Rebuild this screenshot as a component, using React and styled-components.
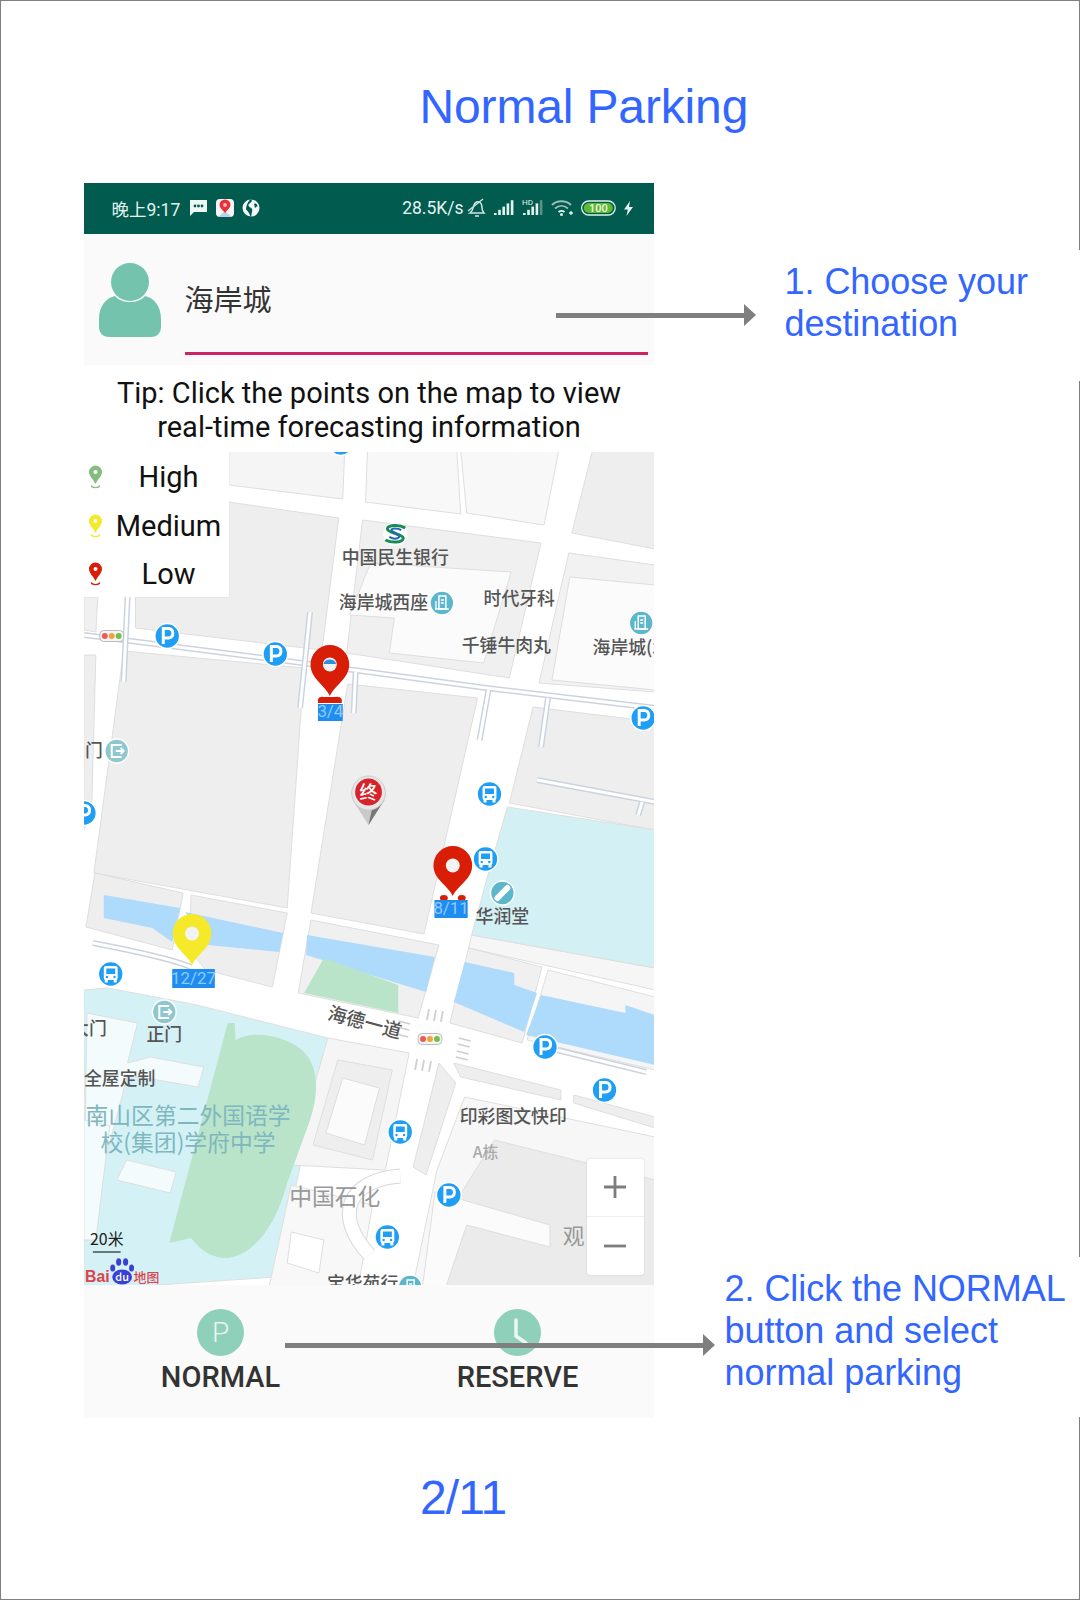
import React from 'react';
import styled, { createGlobalStyle } from 'styled-components';

const Global = createGlobalStyle`
  html, body { margin: 0; padding: 0; background: #fff; }
`;

const Frame = styled.div`
  box-sizing: border-box;
  width: 1080px;
  height: 1600px;
  border: 1.5px solid #7f7f7f;
  font-family: "Liberation Sans", Arial, sans-serif;
  color: #3366ff;
`;

const Title = styled.h1`
  margin: 0;
  height: 181.5px;
  padding: 78px 0 0 418.5px;
  box-sizing: border-box;
  font-size: 48px;
  line-height: 56px;
  font-weight: 400;
  letter-spacing: -0.15px;
`;

const Stage = styled.div`
  position: relative;
  display: flex;
  height: 1235px;
`;

const Phone = styled.div`
  width: 570px;
  margin-left: 82.5px;
  display: flex;
  flex-direction: column;
  font-family: Roboto, "Noto Sans CJK SC", sans-serif;
  color: #111;
`;

const StatusBar = styled.div`
  height: 51px;
  flex: none;
  background: #015b4f;
  display: flex;
  align-items: center;
  padding: 0 21px 0 28px;
  color: #e4f2ee;
  font-size: 17.5px;
`;

const StatusText = styled.span`
  font-family: Roboto, "Noto Sans CJK SC", sans-serif;
  letter-spacing: ${p => p.$spacing || 0}px;
  white-space: nowrap;
`;

const StatusGroup = styled.div`
  display: flex;
  align-items: center;
  gap: ${p => p.$gap}px;
  margin-left: ${p => p.$left || 0}px;
`;

const Spacer = styled.div`
  flex: 1;
`;

const Header = styled.div`
  height: 131px;
  flex: none;
  box-sizing: border-box;
  background: #fafafa;
  display: flex;
  align-items: flex-start;
  padding: 0 6px 0 14px;
`;

const Avatar = styled.svg`
  width: 64px;
  height: 76px;
  margin-top: 27px;
  flex: none;
`;

const SearchField = styled.div`
  flex: 1;
  margin-left: 23px;
  height: 121px;
  box-sizing: border-box;
  padding: 31px 0 20px;
  display: flex;
  align-items: center;
  border-bottom: 3px solid #cb2662;
  font-family: "Noto Sans CJK SC", sans-serif;
  font-size: 29px;
  font-weight: 400;
  color: #333;
`;

const Tip = styled.div`
  height: 87px;
  flex: none;
  box-sizing: border-box;
  padding: 11px 0 0 1px;
  background: #fff;
  text-align: center;
  font-size: 29px;
  line-height: 34px;
  color: #111;
`;

const MapArea = styled.div`
  position: relative;
  height: 833px;
  flex: none;
  overflow: hidden;
  background: #fff;
`;

const MapDrawing = styled.svg`
  display: block;
  width: 570px;
  height: 833px;
`;

const MapLabel = styled.text`
  font-family: "Noto Sans CJK SC", sans-serif;
  font-size: ${p => p.$size || 18}px;
  font-weight: ${p => p.$weight || 500};
  fill: ${p => p.$color || '#555'};
  text-anchor: ${p => p.$anchor || 'middle'};
`;

const LogoWord = styled.text`
  font-family: "Liberation Sans", sans-serif;
  font-size: 16px;
  font-weight: 700;
  fill: #e0414a;
`;

const PinCount = styled.text`
  font-family: Roboto, sans-serif;
  font-size: ${p => p.$size || 17}px;
  fill: #8fcbff;
  text-anchor: middle;
`;

const Legend = styled.div`
  position: absolute;
  left: 0;
  top: 0;
  width: 145px;
  height: 145px;
  box-sizing: border-box;
  padding-top: 1.5px;
  background: #fff;
  display: flex;
  flex-direction: column;
`;

const LegendRow = styled.div`
  height: 48.5px;
  flex: none;
  display: flex;
  align-items: center;
  font-size: 29px;
  color: #111;
`;

const LegendPin = styled.svg`
  width: 15px;
  height: 24px;
  margin-left: 4px;
  flex: none;
`;

const LegendName = styled.span`
  flex: 1;
  text-align: center;
  padding-left: 6px;
`;

const ZoomBox = styled.div`
  position: absolute;
  right: 10px;
  bottom: 10px;
  width: 57px;
  height: 116px;
  background: #fff;
  border-radius: 3px;
  box-shadow: 0 0 2px rgba(0,0,0,.15);
  display: flex;
  flex-direction: column;
`;

const ZoomStep = styled.div`
  flex: 1;
  display: flex;
  align-items: center;
  justify-content: center;
  color: #7d7d7d;
  & + & { border-top: 1px solid #eee; }
`;

const BottomBar = styled.div`
  flex: 1;
  background: #fafafa;
  display: flex;
  gap: 137px;
  padding: 24px 0 0 57px;
`;

const NavButton = styled.div`
  width: 160px;
  display: flex;
  flex-direction: column;
  align-items: center;
  gap: 4px;
`;

const NavCircle = styled.div`
  width: 47px;
  height: 47px;
  border-radius: 50%;
  background: #8fd0bb;
  display: flex;
  align-items: center;
  justify-content: center;
  color: #eaf7f2;
  font-size: 28px;
  font-weight: 300;
`;

const NavLabel = styled.div`
  font-size: 29px;
  line-height: 34px;
  font-weight: 500;
  color: #333;
`;

const Notes = styled.div`
  flex: 1;
  position: relative;
  margin-right: -2px;
  display: flex;
  flex-direction: column;
  justify-content: space-between;
  padding: 67px 0 1px;
`;

const Note = styled.div`
  margin-left: ${p => p.$left}px;
  height: ${p => p.$height}px;
  box-sizing: border-box;
  padding: 11px 0 0 ${p => p.$pad}px;
  background: #fff;
  font-size: 36px;
  line-height: 42px;
  letter-spacing: -0.05px;
  white-space: nowrap;
`;

const ArrowLine = styled.div`
  position: absolute;
  left: ${p => p.$left}px;
  top: ${p => p.$top}px;
  width: ${p => p.$width}px;
  height: 5px;
  background: #7f7f7f;
  &::after {
    content: '';
    position: absolute;
    right: -12px;
    top: -9px;
    border-left: 12px solid #7f7f7f;
    border-top: 11.5px solid transparent;
    border-bottom: 11.5px solid transparent;
  }
`;

const PageNumber = styled.div`
  padding: 52px 0 0 419px;
  font-size: 48px;
  line-height: 56px;
  letter-spacing: -0.9px;
`;

const blocks = [
  ['230,450 347,450 345,499 230,485', '#f5f5f5'],
  ['370,450 460,450 464,514 368,502', '#f8f8f8'],
  ['464,450 563,450 548,525 470,513', '#f8f8f8'],
  ['597,450 660,450 660,549 576,533', '#eeeeee'],
  ['136,597 230,597 230,502 341,518 324,650 136,628', '#eeeeee'],
  ['84,597 98,597 96,632 84,630', '#f0f0f0'],
  ['84,655 96,655 92,800 84,830', '#eeeeee'],
  ['124,651 306,668 289,908 94,873', '#eeeeee'],
  ['350,684 481,698 427,934 313,913', '#eeeeee'],
  ['365,520 545,543 513,678 349,653', '#f0f0f0'],
  ['373,563 515,572 487,663 392,653 397,618 352,615', '#fbfbfb'],
  ['573,553 660,565 660,692 543,683', '#f2f2f2'],
  ['574,577 660,585 660,690 556,680', '#fbfbfb'],
  ['537,707 660,722 660,830 513,803', '#eeeeee'],
  ['475,935 660,968 660,990 472,948', '#f6f6f6'],
  ['511,807 660,830 660,968 475,935 490,880', '#d3f1f5'],
  ['95,873 184,893 173,950 86,927', '#eeeeee'],
  ['192,895 289,913 274,987 207,970 190,950', '#eeeeee'],
  ['313,920 442,945 421,1018 300,993', '#f0f0f0'],
  ['472,948 546,967 526,1043 453,1023', '#f0f0f0'],
  ['552,970 660,997 660,1070 531,1040', '#f5f5f5'],
  ['84,990 108,988 188,1003 198,1005 330,1038 278,1277 84,1290', '#d4f2f6'],
  ['87,1013 138,1023 128,1063 151,1057 205,1067 199,1087 128,1075 95,1200 84,1210', '#f3fbfc'],
  ['117,1180 127,1160 177,1172 171,1193', '#f3fbfc'],
  ['84,1120 110,1126 96,1240 84,1240', '#f3fbfc'],
  ['330,1038 412,1053 388,1170 293,1165', '#f5f5f5'],
  ['340,1060 395,1070 375,1160 315,1145', '#eeeeee'],
  ['345,1078 382,1088 367,1145 328,1133', '#fbfbfb'],
  ['293,1185 375,1205 360,1290 270,1290', '#f8f8f8'],
  ['293,1232 326,1240 321,1273 289,1263', '#ffffff'],
  ['457,1063 565,1090 565,1100 464,1077', '#eeeeee'],
  ['578,1095 660,1117 660,1128 578,1103', '#eeeeee'],
  ['442,1063 459,1083 429,1175 416,1167', '#eeeeee'],
  ['468,1097 660,1137 660,1290 415,1290 440,1170', '#f7f7f7'],
  ['498,1140 660,1180 660,1290 440,1290 460,1200', '#ebebeb'],
  ['438,1192 554,1225 554,1247 470,1225 448,1290 425,1290', '#fbfbfb'],
];

const water = [
  '104,895 181,908 173,942 153,928 104,918',
  '186,912 285,933 281,952 209,945',
  '309,935 438,957 429,992 308,955',
  '468,962 518,973 518,985 541,993 528,1032 457,1002',
  '545,995 630,1013 630,1005 660,1015 660,1065 530,1035',
];

const medians = [
  'M84 635 L304 663 L490 688 L660 708',
  'M128 597 L124 682',
  'M312 612 L302 708',
  'M358 672 L356 713',
  'M492 690 L483 740',
  'M552 698 L545 747',
  'M541 780 L660 802',
  'M647 802 L643 815',
  'M93 943 C130 950 170 958 192 967',
  'M561 1050 L651 1072',
];

const Parking = ({ x, y }) => (
  <g>
    <circle cx={x} cy={y} r="12.5" fill="#1e9ff5" stroke="#fff" strokeWidth="1.5" />
    <path d={`M${x - 4} ${y + 8} V${y - 7.5} H${x + 1.5} A4.8 4.8 0 0 1 ${x + 1.5} ${y + 2} H${x - 4}`} fill="none" stroke="#fff" strokeWidth="3" />
  </g>
);

const Bus = ({ x, y }) => (
  <g>
    <circle cx={x} cy={y} r="12.5" fill="#1e9ff5" stroke="#fff" strokeWidth="1.5" />
    <rect x={x - 7} y={y - 8} width="14" height="14" rx="2" fill="#fff" />
    <rect x={x - 4.5} y={y - 5.5} width="9" height="5.5" fill="#1e9ff5" />
    <circle cx={x - 3.8} cy={y + 3} r="1.2" fill="#1e9ff5" />
    <circle cx={x + 3.8} cy={y + 3} r="1.2" fill="#1e9ff5" />
    <rect x={x - 6} y={y + 5} width="3" height="3.5" fill="#fff" />
    <rect x={x + 3} y={y + 5} width="3" height="3.5" fill="#fff" />
  </g>
);

const Building = ({ x, y }) => (
  <g>
    <circle cx={x} cy={y} r="12" fill="#5db7cc" stroke="#fff" strokeWidth="1.5" />
    <rect x={x - 3} y={y - 7} width="7" height="13" fill="none" stroke="#fff" strokeWidth="1.5" />
    <path d={`M${x - 7} ${y + 6} H${x + 7} M${x - 6} ${y + 6} V${y - 2} M${x - 1} ${y - 3} H${x + 2} M${x - 1} ${y} H${x + 2}`} stroke="#fff" strokeWidth="1.3" fill="none" />
  </g>
);

const Gate = ({ x, y }) => (
  <g>
    <circle cx={x} cy={y} r="12" fill="#8fc7d0" stroke="#fff" strokeWidth="1.5" />
    <path d={`M${x + 5} ${y - 6} H${x - 5} V${y + 6} H${x + 5} M${x - 1} ${y} H${x + 7} M${x + 4} ${y - 3} L${x + 7} ${y} L${x + 4} ${y + 3}`} fill="none" stroke="#fff" strokeWidth="2" />
  </g>
);

const Lights = ({ x, y }) => (
  <g>
    <rect x={x - 12} y={y - 5.5} width="24" height="11" rx="4" fill="#f5f5f5" stroke="#bbb" />
    <circle cx={x - 7} cy={y} r="3" fill="#ee5a55" />
    <circle cx={x} cy={y} r="3" fill="#f3a23f" />
    <circle cx={x + 7} cy={y} r="3" fill="#72c04a" />
  </g>
);

const pinPath = (x, tip, top, w) => {
  const r = w / 2;
  const cy = top + r;
  return `M${x} ${tip} C${x - 6} ${tip - 12} ${x - r} ${cy + 14} ${x - r} ${cy} A${r} ${r} 0 0 1 ${x + r} ${cy} C${x + r} ${cy + 14} ${x + 6} ${tip - 12} ${x} ${tip} Z`;
};

const Pin = ({ x, top, tip, fill, dot }) => (
  <g>
    <path d={pinPath(x, tip, top, 39)} fill={fill} />
    <circle cx={x} cy={top + 19.5} r="7" fill="#f3f3f3" />
    {dot && <path d={`M${x - 6.5} ${top + 19} A7 7 0 0 1 ${x + 6.5} ${top + 19} Z`} fill="#2d8fe0" />}
  </g>
);

const CountTag = ({ x1, x2, y1, y2, label, size }) => (
  <g>
    <rect x={x1} y={y1} width={x2 - x1} height={y2 - y1} fill="#1f8cf0" />
    <PinCount x={(x1 + x2) / 2} y={y2 - 3.5} $size={size}>{label}</PinCount>
  </g>
);

const crosswalks = [
  'M432 1009 L430 1020 M439 1010 L437 1021 M446 1011 L444 1022',
  'M401 1021 L413 1024 M400 1027 L412 1030 M399 1034 L411 1037',
  'M462 1038 L474 1041 M461 1044 L473 1047 M460 1051 L472 1054 M459 1057 L471 1060',
  'M420 1059 L418 1070 M427 1060 L425 1071 M434 1061 L432 1072',
];

const LegendIcon = ({ fill }) => (
  <LegendPin viewBox="0 0 15 24">
    <path d="M7.5 19 C5 14 1 11 1 7 A6.5 6.5 0 0 1 14 7 C14 11 10 14 7.5 19 Z" fill={fill} />
    <circle cx="7.5" cy="7" r="2" fill="#fff" />
    <path d="M3 20 Q7.5 24 12 20 L12 22 Q7.5 24.5 3 22 Z" fill={fill} />
  </LegendPin>
);

const MessageIcon = () => (
  <svg width="19" height="18" viewBox="0 0 19 18">
    <path d="M1 1 H18 V13 H5 L1 17 Z" fill="#eef7f4" />
    <circle cx="6" cy="7" r="1.4" fill="#015b4f" />
    <circle cx="9.5" cy="7" r="1.4" fill="#015b4f" />
    <circle cx="13" cy="7" r="1.4" fill="#015b4f" />
  </svg>
);

const MapsIcon = () => (
  <svg width="18" height="18" viewBox="0 0 18 18">
    <rect width="18" height="18" rx="4" fill="#f7f7f7" />
    <path d="M2 18 L9 12 L16 18 Z" fill="#bcd2ea" />
    <path d="M9 14 C7 11 3.5 9 3.5 6 A5.5 5.5 0 0 1 14.5 6 C14.5 9 11 11 9 14 Z" fill="#e8303a" />
    <circle cx="9" cy="6" r="2" fill="#f7b6b8" />
  </svg>
);

const GlobeIcon = () => (
  <svg width="18" height="18" viewBox="0 0 18 18">
    <circle cx="9" cy="9" r="8.5" fill="#f4faf8" />
    <path d="M10 0.6 C10 4 7 4 6.5 6 C6 8 9 8 10 10 C11 12 9 15 9.5 17.4 L8.5 17.4 C7 14 6 12 4 10.5 C4 8 5 4 8 0.6 Z" fill="#015b4f" />
    <path d="M12 5 C14 4 15 5 15.5 7 L13 9 Z" fill="#015b4f" />
  </svg>
);

const BellOff = () => (
  <svg width="19" height="20" viewBox="0 0 19 20" fill="none" stroke="#cfe5df" strokeWidth="1.5">
    <path d="M3 15 C6 13 6 10 7 7 C8 4 11 3 13 4.5 C15 6 15 8 15 10 C15 12 16 14 17 15 Z" />
    <path d="M8 18 H12" />
    <path d="M1 13 L16 1" />
  </svg>
);

const Signal = ({ hd, dim }) => (
  <svg width="22" height="20" viewBox="0 0 22 20">
    {[0, 1, 2, 3, 4].map(i => (
      <rect key={i} x={1 + i * 4.2} y={17 - i * 3.2 - 2} width="2.6" height={i * 3.2 + 2} fill={i === 4 && dim ? '#5d8f86' : '#e4f2ee'} />
    ))}
    {hd && <text x="0" y="7" fontFamily="Roboto, sans-serif" fontSize="8" fill="#e4f2ee">HD</text>}
  </svg>
);

const Wifi = () => (
  <svg width="23" height="18" viewBox="0 0 23 18" fill="none" stroke="#9dbdb5" strokeWidth="1.8">
    <path d="M1 6 C6 1 15 1 20 6" />
    <path d="M4 9.5 C8 6 13 6 17 9.5" />
    <path d="M7.5 13 C9.5 11.5 11.5 11.5 13.5 13" stroke="#e4f2ee" />
    <circle cx="10.5" cy="15.5" r="1.5" fill="#e4f2ee" stroke="none" />
    <path d="M18 14 H22 M20 12 V16" stroke="#e4f2ee" strokeWidth="1.3" />
  </svg>
);

const Battery = () => (
  <svg width="36" height="16" viewBox="0 0 36 16">
    <rect x="0.7" y="1" width="33.5" height="14" rx="7" fill="none" stroke="#e4f2ee" strokeWidth="1.3" />
    <rect x="2.8" y="3" width="29" height="10" rx="5" fill="#5fba2e" />
    <text x="17.3" y="12" textAnchor="middle" fontFamily="Roboto, sans-serif" fontSize="11" fontWeight="500" fill="#eef7e6">100</text>
  </svg>
);

const Bolt = () => (
  <svg width="9" height="15" viewBox="0 0 9 15">
    <path d="M6 0 L0 8.5 H3.8 L2.5 15 L9 6 H5 Z" fill="#e4f2ee" />
  </svg>
);

export default function App() {
  return (
    <Frame>
      <Global />
      <Title>Normal Parking</Title>
      <Stage>
        <Phone>
          <StatusBar>
            <StatusText>晚上9:17</StatusText>
            <StatusGroup $gap={8} $left={9}>
              <MessageIcon />
              <MapsIcon />
              <GlobeIcon />
            </StatusGroup>
            <Spacer />
            <StatusText $spacing={0}>28.5K/s</StatusText>
            <StatusGroup $gap={7} $left={3}>
              <BellOff />
              <Signal />
              <Signal hd dim />
              <Wifi />
              <Battery />
              <Bolt />
            </StatusGroup>
          </StatusBar>
          <Header>
            <Avatar viewBox="0 0 64 76">
              <path d="M17 35 C8 37 1 45 1 58 L1 66 C1 72 5 76 11 76 L53 76 C59 76 63 72 63 66 L63 58 C63 45 56 37 47 35 C40 43 24 43 17 35 Z" fill="#74c4ad" />
              <ellipse cx="32" cy="21" rx="19" ry="19" fill="#74c4ad" />
            </Avatar>
            <SearchField>海岸城</SearchField>
          </Header>
          <Tip>
            Tip: Click the points on the map to view
            <br />
            real-time forecasting information
          </Tip>
          <MapArea>
            <MapDrawing viewBox="84 452 570 833">
              <rect x="84" y="452" width="570" height="834" fill="#fff" />
              <g transform="translate(0.68 0) scale(0.9915 1)">
                {blocks.map(([points, fill]) => (
                  <polygon key={points} points={points} fill={fill} stroke="#dedede" strokeWidth="1" strokeLinejoin="round" />
                ))}
                {water.map(points => <polygon key={points} points={points} fill="#aedbfb" />)}
                <polygon points="326,958 401,985 401,1013 306,993" fill="#b9e4c9" />
                <path d="M229 1023 L236 1023 L237 1040 C255 1030 285 1035 304 1050 C320 1065 322 1090 312 1120 L289 1183 C278 1225 255 1256 228 1258 C208 1258 198 1245 192 1238 L170 1243 Z" fill="#b9e4c9" />
                <path d="M403 1176 C350 1180 335 1215 372 1255" fill="none" stroke="#d8d8d8" strokeWidth="15" />
                <path d="M403 1176 C350 1180 335 1215 372 1255" fill="none" stroke="#fff" strokeWidth="13" />
                {medians.map(d => (
                  <g key={d}>
                    <path d={d} fill="none" stroke="#ccd3de" strokeWidth="6" />
                    <path d={d} fill="none" stroke="#fff" strokeWidth="3" />
                  </g>
                ))}
                {crosswalks.map(d => <path key={d} d={d} stroke="#cfcfcf" strokeWidth="1.8" />)}
                <Lights x={112} y={636} />
                <Lights x={433} y={1039} />

                <Parking x={343} y={443} />
                <Parking x={168} y={636} />
                <Parking x={277} y={654} />
                <Parking x={648} y={718} />
                <Parking x={84} y={813} />
                <Parking x={549} y={1047} />
                <Parking x={609} y={1090} />
                <Parking x={452} y={1195} />
                <Bus x={493} y={794} />
                <Bus x={489} y={859} />
                <Bus x={111} y={974} />
                <Bus x={403} y={1132} />
                <Bus x={390} y={1237} />
                <Building x={445} y={603} />
                <Building x={646} y={623} />
                <Building x={413} y={1287} />
                <Gate x={117} y={751} />
                <Gate x={165} y={1012} />

                <circle cx="398" cy="534" r="12" fill="#fff" />
                <path d="M408 528 C402 524 390 525 390 529 C390 533 406 534 406 538 C406 543 394 543 388 540" fill="none" stroke="#1a8a55" strokeWidth="3" />
                <path d="M404 530 C400 528 394 528 394 530 C396 533 402 534 402 537 C400 539 396 539 392 537" fill="none" stroke="#2467b5" strokeWidth="2" />

                <circle cx="506" cy="893" r="12" fill="#5db7cc" stroke="#fff" strokeWidth="1.5" />
                <path d="M501 898 L511 888" stroke="#fff" strokeWidth="6" strokeLinecap="round" />

                <MapLabel x={398} y={564}>中国民生银行</MapLabel>
                <MapLabel x={386} y={609}>海岸城西座</MapLabel>
                <MapLabel x={523} y={605}>时代牙科</MapLabel>
                <MapLabel x={510} y={652}>千锤牛肉丸</MapLabel>
                <MapLabel x={597} y={654} $anchor="start">海岸城(北</MapLabel>
                <MapLabel x={94} y={757}>门</MapLabel>
                <MapLabel x={506} y={923}>华润堂</MapLabel>
                <MapLabel x={165} y={1041}>正门</MapLabel>
                <MapLabel x={107} y={1035} $anchor="end">大门</MapLabel>
                <MapLabel x={120} y={1085}>全屋定制</MapLabel>
                <MapLabel x={189} y={1124} $size={23} $weight={400} $color="#7fb7bf">南山区第二外国语学</MapLabel>
                <MapLabel x={189} y={1151} $size={23} $weight={400} $color="#7fb7bf">校(集团)学府中学</MapLabel>
                <MapLabel x={367} y={1029} transform="rotate(15 367 1023)" $size={19}>海德一道</MapLabel>
                <MapLabel x={517} y={1123}>印彩图文快印</MapLabel>
                <MapLabel x={489} y={1158} $size={16} $color="#aaa">A栋</MapLabel>
                <MapLabel x={337} y={1205} $size={23} $weight={400} $color="#999">中国石化</MapLabel>
                <MapLabel x={578} y={1244} $size={22} $weight={400} $color="#999">观</MapLabel>
                <MapLabel x={365} y={1290}>宝华苑行</MapLabel>

                <path d="M355 800 L371 825 L387 800 Z" fill="#c9c9c9" />
                <path d="M371 825 L387 800 L377 798 Z" fill="#777" />
                <circle cx="371" cy="793" r="17" fill="#e6e6e6" stroke="#ccc" />
                <circle cx="371" cy="792" r="13.5" fill="#d8232c" />
                <MapLabel x={371} y={799} $size={18} $color="#fff">终</MapLabel>

                <path d="M320 699 Q322 696 326 697 L337 697 Q342 696 344 699 L344 703 L320 703 Z" fill="#d81e06" />
                <Pin x={332} top={645} tip={696} fill="#d81e06" dot />
                <CountTag x1={320} x2={345} y1={704} y2={721} label="3/4" />

                <ellipse cx="447" cy="898" rx="4" ry="3" fill="#d81e06" />
                <ellipse cx="465" cy="898" rx="4" ry="3" fill="#d81e06" />
                <Pin x={456} top={846} tip={896} fill="#d81e06" />
                <CountTag x1={437.5} x2={471} y1={900} y2={918} label="8/11" />

                <Pin x={193} top={914} tip={965} fill="#f5e92a" />
                <CountTag x1={173} x2={216} y1={969} y2={988} label="12/27" />

                <MapLabel x={107} y={1245} $size={16} $weight={400} $color="#222">20米</MapLabel>
                <path d="M93 1252 H121" stroke="#222" strokeWidth="1.2" />
                <LogoWord x={85} y={1282}>Bai</LogoWord>
                <g fill="#3a3fd8">
                  <ellipse cx="113" cy="1268" rx="2.5" ry="3.5" />
                  <ellipse cx="119" cy="1262" rx="2.6" ry="3.8" />
                  <ellipse cx="126" cy="1262" rx="2.6" ry="3.8" />
                  <ellipse cx="132" cy="1268" rx="2.5" ry="3.5" />
                  <ellipse cx="122.5" cy="1277" rx="10" ry="7.5" />
                </g>
                <MapLabel x={122.5} y={1281} $size={11} $color="#fff">du</MapLabel>
                <MapLabel x={134} y={1282} $size={13} $color="#e0414a" $anchor="start">地图</MapLabel>
              </g>
            </MapDrawing>
            <Legend>
              <LegendRow><LegendIcon fill="#84bd7f" /><LegendName>High</LegendName></LegendRow>
              <LegendRow><LegendIcon fill="#f5e92a" /><LegendName>Medium</LegendName></LegendRow>
              <LegendRow><LegendIcon fill="#d81e06" /><LegendName>Low</LegendName></LegendRow>
            </Legend>
            <ZoomBox>
              <ZoomStep>
                <svg width="22" height="22" viewBox="0 0 22 22"><path d="M11 0 V22 M0 11 H22" stroke="#7d7d7d" strokeWidth="2.8" /></svg>
              </ZoomStep>
              <ZoomStep>
                <svg width="22" height="4" viewBox="0 0 22 4"><path d="M0 2 H22" stroke="#7d7d7d" strokeWidth="2.8" /></svg>
              </ZoomStep>
            </ZoomBox>
          </MapArea>
          <BottomBar>
            <NavButton>
              <NavCircle>P</NavCircle>
              <NavLabel>NORMAL</NavLabel>
            </NavButton>
            <NavButton>
              <NavCircle>
                <svg width="47" height="47" viewBox="0 0 47 47" fill="none"><path d="M22 11 V27 L32 34" stroke="#eaf7f2" strokeWidth="3.5" strokeLinecap="round" /></svg>
              </NavCircle>
              <NavLabel>RESERVE</NavLabel>
            </NavButton>
          </BottomBar>
        </Phone>
        <Notes>
          <Note $left={126} $pad={5} $height={131}>1. Choose your<br />destination</Note>
          <Note $left={68} $pad={3} $height={160}>2. Click the NORMAL<br />button and select<br />normal parking</Note>
        </Notes>
        <ArrowLine $left={554.5} $top={130} $width={188} />
        <ArrowLine $left={283.5} $top={1160} $width={418} />
      </Stage>
      <PageNumber>2/11</PageNumber>
    </Frame>
  );
}
